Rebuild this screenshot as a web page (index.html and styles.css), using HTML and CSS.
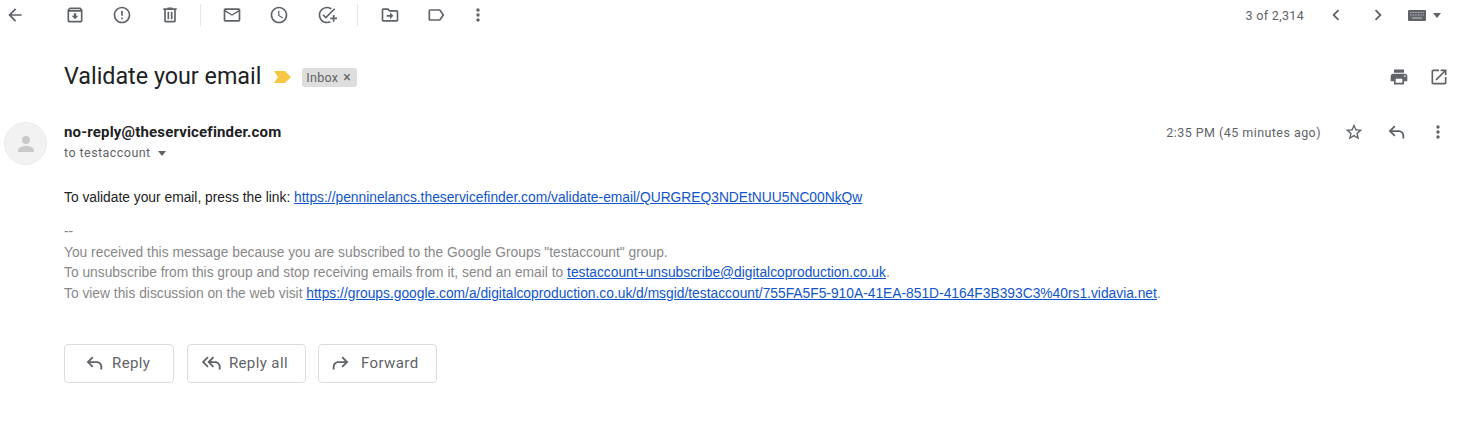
FILE: index.html
```html
<!DOCTYPE html>
<html>
<head>
  <title>Validate your email</title>
  <meta name="viewport" content="width=device-width, initial-scale=1">
  <link rel="stylesheet" href="styles.css">
</head>
<body>
  <div class="toolbar">
    <svg class="icon back" viewBox="0 0 24 24"><path d="M20 11H7.83l5.59-5.59L12 4l-8 8 8 8 1.41-1.41L7.83 13H20v-2z"/></svg>
    <div class="tool-group">
      <svg class="icon" viewBox="0 0 24 24"><path d="M20.54 5.23l-1.39-1.68C18.88 3.21 18.47 3 18 3H6c-.47 0-.88.21-1.16.55L3.46 5.23C3.17 5.57 3 6.02 3 6.5V19c0 1.1.9 2 2 2h14c1.1 0 2-.9 2-2V6.5c0-.48-.17-.93-.46-1.27zM6.24 5h11.52l.83 1H5.42l.82-1zM5 19V8h14v11H5zm8.45-9h-2.9v3H8l4 4 4-4h-2.55z"/></svg>
      <svg class="icon" viewBox="0 0 24 24"><path d="M11 15h2v2h-2zm0-8h2v6h-2zm.99-5C6.47 2 2 6.48 2 12s4.47 10 9.99 10C17.52 22 22 17.52 22 12S17.52 2 11.99 2zM12 20c-4.42 0-8-3.58-8-8s3.58-8 8-8 8 3.58 8 8-3.58 8-8 8z"/></svg>
      <svg class="icon" viewBox="0 0 24 24"><path d="M15 4V3H9v1H4v2h1v13c0 1.1.9 2 2 2h10c1.1 0 2-.9 2-2V6h1V4h-5zm2 15H7V6h10v13zM9 8h2v9H9zm4 0h2v9h-2z"/></svg>
    </div>
    <div class="divider first-divider"></div>
    <div class="tool-group">
      <svg class="icon" viewBox="0 0 24 24"><path d="M20 4H4c-1.1 0-2 .9-2 2v12c0 1.1.9 2 2 2h16c1.1 0 2-.9 2-2V6c0-1.1-.9-2-2-2zm0 14H4V8l8 5 8-5v10zm-8-7L4 6h16l-8 5z"/></svg>
      <svg class="icon" viewBox="0 0 24 24"><path d="M11.99 2C6.47 2 2 6.48 2 12s4.47 10 9.99 10C17.52 22 22 17.52 22 12S17.52 2 11.99 2zM12 20c-4.42 0-8-3.58-8-8s3.58-8 8-8 8 3.58 8 8-3.58 8-8 8zm.5-13H11v6l5.25 3.15.75-1.23-4.5-2.67z"/></svg>
      <svg class="icon" viewBox="0 0 24 24"><path d="M22 5.18L10.59 16.6l-4.24-4.24 1.41-1.41 2.83 2.83 10-10L22 5.18zM12 20c-4.41 0-8-3.59-8-8s3.59-8 8-8c1.57 0 3.04.46 4.28 1.25l1.45-1.45C16.1 2.67 14.13 2 12 2 6.48 2 2 6.48 2 12s4.48 10 10 10c1.73 0 3.36-.44 4.78-1.22l-1.5-1.5c-1 .46-2.11.72-3.28.72zm7-5h-3v2h3v3h2v-3h3v-2h-3v-3h-2v3z"/></svg>
    </div>
    <div class="divider"></div>
    <div class="tool-group tight">
      <svg class="icon" viewBox="0 0 24 24"><path d="M20 6h-8l-2-2H4c-1.1 0-1.99.9-1.99 2L2 18c0 1.1.9 2 2 2h16c1.1 0 2-.9 2-2V8c0-1.1-.9-2-2-2zm0 12H4V6h5.17l2 2H20v10zm-8-1v-3H8v-2h4V9l4 4-4 4z"/></svg>
      <svg class="icon" viewBox="0 0 24 24"><path d="M17.63 5.84C17.27 5.33 16.67 5 16 5L5 5.01C3.9 5.01 3 5.9 3 7v10c0 1.1.9 1.99 2 1.99L16 19c.67 0 1.27-.33 1.63-.84L22 12l-4.37-6.16zM16 17H5V7h11l3.55 5L16 17z"/></svg>
      <svg class="icon more" viewBox="0 0 24 24"><path d="M12 8c1.1 0 2-.9 2-2s-.9-2-2-2-2 .9-2 2 .9 2 2 2zm0 2c-1.1 0-2 .9-2 2s.9 2 2 2 2-.9 2-2-.9-2-2-2zm0 6c-1.1 0-2 .9-2 2s.9 2 2 2 2-.9 2-2-.9-2-2-2z"/></svg>
    </div>
    <div class="pager">
      <span class="count">3 of 2,314</span>
      <svg class="icon chevron" viewBox="0 0 24 24"><path d="M15.41 7.41L14 6l-6 6 6 6 1.41-1.41L10.83 12z"/></svg>
      <svg class="icon chevron" viewBox="0 0 24 24"><path d="M10 6L8.59 7.41 13.17 12l-4.58 4.59L10 18l6-6z"/></svg>
      <div class="input-tool">
        <svg class="keyboard" viewBox="0 0 18 11"><rect width="18" height="11" rx="1" fill="#5f6368"/><path d="M2 2.5h14M2 5h14" stroke="#b5b7ba" stroke-width="1.2" stroke-dasharray="1 .6"/><path d="M4 8h10" stroke="#b5b7ba" stroke-width="1.2"/></svg>
        <span class="caret"></span>
      </div>
    </div>
  </div>

  <div class="subject-row">
    <h1 class="subject">Validate your email</h1>
    <svg class="marker" viewBox="0 0 17 12"><path d="M0 0h11l6 6-6 6H0l4-6z"/></svg>
    <span class="chip">Inbox <span class="chip-x">&#215;</span></span>
    <div class="subject-actions">
      <svg class="icon" viewBox="0 0 24 24"><path d="M19 8H5c-1.66 0-3 1.34-3 3v6h4v4h12v-4h4v-6c0-1.66-1.34-3-3-3zm-3 11H8v-5h8v5zm3-7c-.55 0-1-.45-1-1s.45-1 1-1 1 .45 1 1-.45 1-1 1zm-1-9H6v4h12V3z"/></svg>
      <svg class="icon" viewBox="0 0 24 24"><path d="M19 19H5V5h7V3H5c-1.11 0-2 .9-2 2v14c0 1.1.89 2 2 2h14c1.1 0 2-.9 2-2v-7h-2v7zM14 3v2h3.59l-9.83 9.83 1.41 1.41L19 6.41V10h2V3h-7z"/></svg>
    </div>
  </div>

  <div class="message">
    <div class="avatar">
      <svg viewBox="0 0 24 24"><circle cx="12" cy="8" r="4"/><path d="M12 14c-3.3 0-8 1.4-8 4.2V20h16v-1.8C20 15.4 15.3 14 12 14z"/></svg>
    </div>
    <div class="message-main">
      <div class="message-head">
        <div class="sender-block">
          <div class="sender">no-reply@theservicefinder.com</div>
          <div class="recipient">to testaccount <span class="caret small"></span></div>
        </div>
        <div class="message-meta">
          <span class="time">2:35 PM (45 minutes ago)</span>
          <svg class="icon" viewBox="0 0 24 24"><path d="M22 9.24l-7.19-.62L12 2 9.19 8.63 2 9.24l5.46 4.73L5.82 21 12 17.27 18.18 21l-1.63-7.03L22 9.24zM12 15.4l-3.76 2.27 1-4.28-3.32-2.88 4.38-.38L12 6.1l1.71 4.04 4.38.38-3.32 2.88 1 4.28L12 15.4z"/></svg>
          <svg class="icon reply-icon" viewBox="0 0 24 24"><path d="M21 19h-2v-3c0-2.2-1.8-4-4-4H7.8l3.6 3.6L10 17l-6-6 6-6 1.4 1.4L7.8 10H15c3.3 0 6 2.7 6 6v3z"/></svg>
          <svg class="icon" viewBox="0 0 24 24"><path d="M12 8c1.1 0 2-.9 2-2s-.9-2-2-2-2 .9-2 2 .9 2 2 2zm0 2c-1.1 0-2 .9-2 2s.9 2 2 2 2-.9 2-2-.9-2-2-2zm0 6c-1.1 0-2 .9-2 2s.9 2 2 2 2-.9 2-2-.9-2-2-2z"/></svg>
        </div>
      </div>

      <div class="body-text">
        To validate your email, press the link: <a href="#">https://penninelancs.theservicefinder.com/validate-email/QURGREQ3NDEtNUU5NC00NkQw</a>
      </div>
      <div class="signature">
        --<br>
        You received this message because you are subscribed to the Google Groups "testaccount" group.<br>
        To unsubscribe from this group and stop receiving emails from it, send an email to <a href="#">testaccount+unsubscribe@digitalcoproduction.co.uk</a>.<br>
        To view this discussion on the web visit <a href="#">https://groups.google.com/a/digitalcoproduction.co.uk/d/msgid/testaccount/755FA5F5-910A-41EA-851D-4164F3B393C3%40rs1.vidavia.net</a>.
      </div>

      <div class="reply-buttons">
        <div class="reply-btn btn-reply">
          <svg class="icon" viewBox="0 0 24 24"><path d="M21 19h-2v-3c0-2.2-1.8-4-4-4H7.8l3.6 3.6L10 17l-6-6 6-6 1.4 1.4L7.8 10H15c3.3 0 6 2.7 6 6v3z"/></svg>
          Reply
        </div>
        <div class="reply-btn btn-all">
          <svg class="icon" viewBox="0 0 24 24"><path d="M22.5 19h-2v-3c0-2.2-1.8-4-4-4H12l3.4 3.6L14 17l-6-6 6-6 1.4 1.4L12 10h4.500c3.300 0 6 2.700 6 6v3zM8 5l1.400 1.400L4.800 11l4.600 4.600L8 17l-6-6z"/></svg>
          Reply all
        </div>
        <div class="reply-btn btn-forward">
          <svg class="icon flip" viewBox="0 0 24 24"><path d="M21 19h-2v-3c0-2.2-1.8-4-4-4H7.8l3.600 3.600L10 17l-6-6 6-6 1.400 1.400L7.800 10H15c3.300 0 6 2.700 6 6v3z"/></svg>
          Forward
        </div>
      </div>
    </div>
  </div>
</body>
</html>
```

FILE: styles.css
```css
body {
  margin: 0;
  background-color: #fff;
  font-family: Roboto, Arial, sans-serif;
  color: #202124;
}
.icon {
  width: 20px;
  height: 20px;
  fill: #5f6368;
  flex-shrink: 0;
}
.toolbar {
  display: flex;
  align-items: center;
  height: 30px;
  padding-left: 5px;
  padding-right: 35px;
}
.back {
  margin-right: 39.5px;
}
.tool-group {
  display: flex;
  align-items: center;
  gap: 27.5px;
}
.tool-group.tight {
  gap: 26px;
}
.more {
  margin-left: -4px;
}
.divider {
  width: 1px;
  height: 22px;
  margin: 0 22px 0 20px;
  background-color: #e4e6e8;
}
.first-divider {
  margin-right: 21px;
}
.pager {
  display: flex;
  align-items: center;
  margin-left: auto;
}
.count {
  font-size: 12.5px;
  letter-spacing: .32px;
  color: #5f6368;
  margin-right: 21px;
}
.chevron {
  width: 22px;
  height: 22px;
}
.chevron + .chevron {
  margin-left: 20px;
}
.input-tool {
  display: flex;
  align-items: center;
  margin-left: 19px;
  gap: 7px;
}
.keyboard {
  width: 18px;
  height: 11px;
}
.caret {
  width: 0;
  height: 0;
  border-left: 4.5px solid transparent;
  border-right: 4.5px solid transparent;
  border-top: 5px solid #5f6368;
}
.caret.small {
  display: inline-block;
  margin-left: 4px;
  vertical-align: middle;
}
.subject-row {
  display: flex;
  align-items: center;
  height: 34px;
  margin-top: 30px;
  padding-left: 64px;
  padding-right: 27px;
}
.subject {
  margin: 0;
  padding-bottom: 2px;
  font-size: 23.3px;
  font-weight: 400;
  color: #202124;
}
.marker {
  width: 17px;
  height: 12px;
  margin-left: 13px;
  fill: #f6c644;
}
.chip {
  display: flex;
  align-items: center;
  height: 19px;
  margin-left: 11px;
  padding: 0 6px 0 4px;
  border-radius: 3px;
  background-color: #dddddd;
  font-size: 12.5px;
  letter-spacing: .3px;
  color: #5f6368;
}
.chip-x {
  margin-left: 5px;
  font-size: 14px;
}
.subject-actions {
  display: flex;
  align-items: center;
  margin-left: auto;
  gap: 20px;
}
.message {
  display: flex;
  margin-top: 26px;
  padding-left: 4px;
  padding-right: 28px;
}
.avatar {
  display: flex;
  align-items: center;
  justify-content: center;
  box-sizing: border-box;
  width: 43px;
  height: 43px;
  margin-top: 2px;
  border: 1px solid #ebebeb;
  border-radius: 50%;
  background-color: #f2f2f2;
}
.avatar svg {
  width: 24px;
  height: 24px;
  fill: #c9c9c9;
}
.message-main {
  flex: 1;
  margin-left: 17px;
}
.message-head {
  display: flex;
  justify-content: space-between;
}
.sender {
  font-size: 15px;
  font-weight: 700;
  letter-spacing: .17px;
  line-height: 20px;
  margin-top: 2px;
}
.recipient {
  font-size: 12.5px;
  letter-spacing: .45px;
  line-height: 20px;
  margin-top: 1px;
  color: #5f6368;
}
.message-meta {
  display: flex;
  align-items: center;
  height: 22px;
  margin-top: 1px;
}
.time {
  font-size: 12.5px;
  letter-spacing: .45px;
  color: #5f6368;
  margin-right: 23px;
}
.message-meta .icon + .icon {
  margin-left: 22px;
}
.message-meta .icon + .reply-icon {
  width: 22px;
  height: 22px;
  margin-left: 21px;
  margin-right: -1px;
}
.body-text {
  margin-top: 25px;
  font-family: "Liberation Sans", Arial, sans-serif;
  font-size: 13.8px;
  line-height: 20.5px;
  color: #222;
}
.signature {
  margin-top: 13.5px;
  font-family: "Liberation Sans", Arial, sans-serif;
  font-size: 13.8px;
  line-height: 20.5px;
  color: #888;
}
a {
  color: #1155cc;
}
.reply-buttons {
  display: flex;
  gap: 13px;
  margin-top: 39.5px;
}
.reply-btn {
  display: flex;
  align-items: center;
  box-sizing: border-box;
  height: 39px;
  border: 1px solid #dadce0;
  border-radius: 4px;
  font-size: 15px;
  letter-spacing: .4px;
  color: #5f6368;
}
.reply-btn .icon {
  width: 22px;
  height: 22px;
}
.btn-reply {
  gap: 7px;
  padding: 0 22.5px 0 18px;
}
.btn-all {
  gap: 7px;
  padding: 0 17px 0 12px;
}
.btn-forward {
  gap: 9px;
  margin-left: -1px;
  padding: 0 17px 0 11px;
}
.flip {
  transform: scaleX(-1);
}
```
